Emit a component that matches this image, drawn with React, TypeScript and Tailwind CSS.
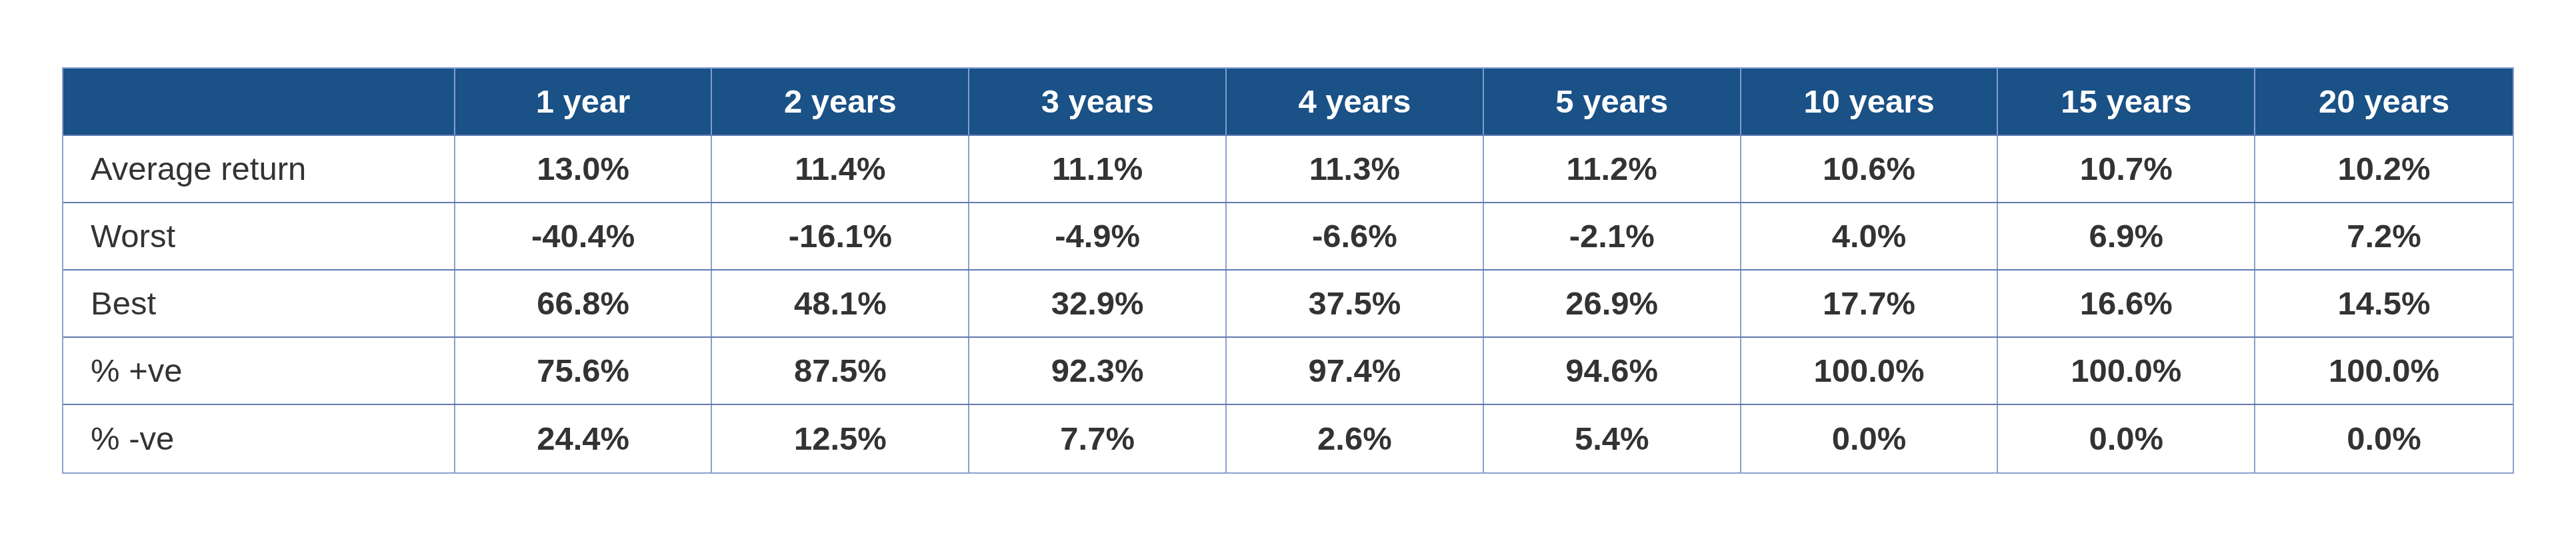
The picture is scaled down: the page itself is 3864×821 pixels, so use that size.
import React from "react";

const headers = ["1 year", "2 years", "3 years", "4 years", "5 years", "10 years", "15 years", "20 years"];
const rows: [string, string[]][] = [
  ["Average return", ["13.0%", "11.4%", "11.1%", "11.3%", "11.2%", "10.6%", "10.7%", "10.2%"]],
  ["Worst", ["-40.4%", "-16.1%", "-4.9%", "-6.6%", "-2.1%", "4.0%", "6.9%", "7.2%"]],
  ["Best", ["66.8%", "48.1%", "32.9%", "37.5%", "26.9%", "17.7%", "16.6%", "14.5%"]],
  ["% +ve", ["75.6%", "87.5%", "92.3%", "97.4%", "94.6%", "100.0%", "100.0%", "100.0%"]],
  ["% -ve", ["24.4%", "12.5%", "7.7%", "2.6%", "5.4%", "0.0%", "0.0%", "0.0%"]],
];

export default function App() {
  return (
    <div
      className="w-[3864px] h-[821px] bg-white pt-[101px] pl-[93px]"
      style={{ fontFamily: '"Liberation Sans", Arial, sans-serif' }}
    >
      <div className="w-[3678px] border-2 border-t-0 border-[#8aa0cd]">
        <div className="flex h-[103px] bg-[#1a5186] border-t-2 border-b-2 border-[#7f9fd2] border-b-[#5f7db5]">
          <div className="w-[588px] border-r-2 border-[#7f9fd2]" />
          {headers.map((h, i) => (
            <div
              key={h}
              className={`w-[386px] flex items-center justify-center text-white font-bold text-[49px] ${
                i < headers.length - 1 ? "border-r-2 border-[#7f9fd2]" : ""
              }`}
            >
              {h}
            </div>
          ))}
        </div>
        {rows.map(([label, vals], r) => (
          <div
            key={label}
            className={`flex h-[101px] ${r < rows.length - 1 ? "border-b-2 border-[#5f7aaf]" : ""}`}
          >
            <div className="w-[588px] flex items-center pl-[41px] text-[49px] text-[#333333] border-r-2 border-[#8aa0cd]">
              {label}
            </div>
            {vals.map((v, i) => (
              <div
                key={i}
                className={`w-[386px] flex items-center justify-center text-[49px] font-bold text-[#333333] ${
                  i < vals.length - 1 ? "border-r-2 border-[#8aa0cd]" : ""
                }`}
              >
                {v}
              </div>
            ))}
          </div>
        ))}
      </div>
    </div>
  );
}
